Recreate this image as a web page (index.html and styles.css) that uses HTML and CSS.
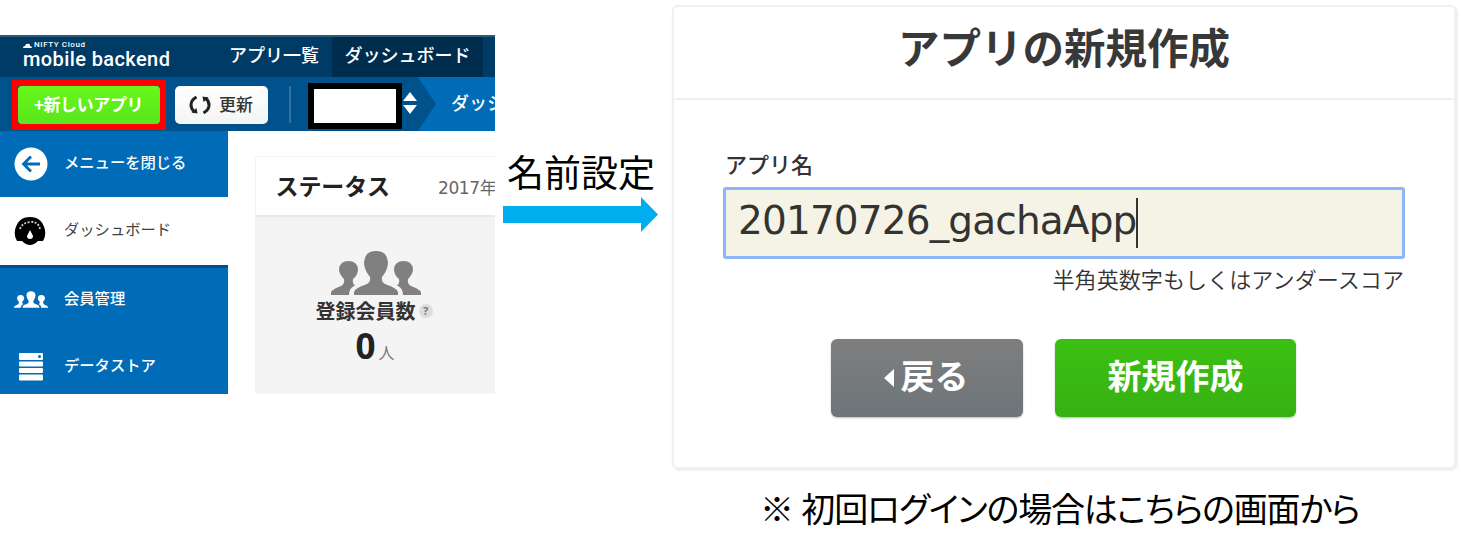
FILE: index.html
```html
<!DOCTYPE html>
<html lang="ja">
<head>
<meta charset="utf-8">
<title>アプリの新規作成</title>
<link rel="stylesheet" href="styles.css">
</head>
<body>
<svg class="defs" width="0" height="0">
  <symbol id="people" viewBox="0 0 90 46">
    <path d="M23 45V42Q24 38 35 34.500Q40 32.500 39 27Q33 20 33 12Q34 1 45 1T57 12Q57 20 51 27Q50 32.500 55 34.500Q66 38 67 42V45Z"/>
    <path d="M0 45V42Q2 39 10 36Q14 34 13 29Q8 24 8 19Q9 11 17.500 11T27 19Q27 25 22 29Q21 33 24 35.500Q18 38 18 45Z"/>
    <path d="M90 45V42Q88 39 80 36Q76 34 77 29Q82 24 82 19Q81 11 72.500 11T63 19Q63 25 68 29Q69 33 66 35.500Q72 38 72 45Z"/>
  </symbol>
</svg>
<main class="page">
  <section class="console">
    <nav class="topbar">
      <div class="brand"><span class="brand-small"><svg width="9" height="5" viewBox="0 0 9 5"><path d="M0 5Q0 3 2 3Q3 0 5 1Q7 0 7 3Q9 3 9 5Z"/></svg>NIFTY Cloud</span><span class="brand-name">mobile backend</span></div>
      <a class="tab apps">アプリ一覧</a>
      <a class="tab active">ダッシュボード</a>
    </nav>
    <div class="toolbar">
      <div class="highlight"><button class="new-app">+新しいアプリ</button></div>
      <button class="refresh"><svg width="24" height="20" viewBox="0 0 24 20"><path d="M8.500 2Q3 5 3 10Q3 14 6.500 17M15.500 18Q21 15 21 10Q21 6 17.500 3" fill="none" stroke="#222" stroke-width="3"/><path d="M3.500 17.500L9.500 18.500L8.500 13ZM20.500 2.500L14.500 1.500L15.500 7Z" fill="#222"/></svg><span>更新</span></button>
      <i class="divider"></i>
      <div class="app-select"></div>
      <svg class="sort" width="14" height="22" viewBox="0 0 14 22"><path d="M0 9L7 0L14 9ZM0 13H14L7 22Z" fill="#fff"/></svg>
      <div class="crumb"><svg width="18" height="54" viewBox="0 0 18 54"><path d="M0 0L18 27L0 54Z" fill="#00528c"/></svg><span>ダッシ</span></div>
    </div>
    <div class="body">
      <aside class="sidebar">
        <a class="item first"><span class="icon"><svg width="34" height="34" viewBox="0 0 34 34"><circle cx="17" cy="17" r="16.500" fill="#fff"/><path d="M26 17H10M17 9.500L9.500 17L17 24.500" fill="none" stroke="#006cb7" stroke-width="2.800"/></svg></span><span>メニューを閉じる</span></a>
        <a class="item current"><span class="icon"><svg width="32" height="30" viewBox="0 0 32 30"><path d="M3 25Q0 20 1 14Q4 1 16 1T31 14Q32 20 29 25H24Q20 29 16 29T8 25Z"/><path d="M6 13Q8 7 16 6T26 13" fill="none" stroke="#ccc" stroke-width="1.800" stroke-dasharray="2 1.500"/><path d="M16 14L19 20Q19 23 16 23T13 20Z" fill="#fff"/></svg></span><span>ダッシュボード</span></a>
        <a class="item members"><span class="icon"><svg width="34" height="19"><use href="#people" width="34" height="19"/></svg></span><span>会員管理</span></a>
        <a class="item store"><span class="icon"><svg width="24" height="28" viewBox="0 0 24 28" fill="#fff"><rect width="24" height="7" rx="1"/><rect y="8.500" width="24" height="5" rx="1"/><rect y="15" width="24" height="5" rx="1"/><rect y="21.500" width="24" height="6" rx="1"/><circle cx="20.500" cy="3.500" r="1.500" fill="#006cb7"/></svg></span><span>データストア</span></a>
      </aside>
      <div class="status">
        <header class="status-head"><b>ステータス</b><span>2017年</span></header>
        <div class="metric">
          <svg width="90" height="46" fill="#808080"><use href="#people" width="90" height="46"/></svg>
          <div class="metric-label"><b>登録会員数</b><i>?</i></div>
          <div class="metric-value"><b>0</b><span>人</span></div>
        </div>
      </div>
    </div>
  </section>
  <section class="step">
    <p>名前設定</p>
    <svg width="155" height="35" viewBox="0 0 155 35"><path d="M0 9H138V0L155 17.500L138 35V26H0Z" fill="#00aeef"/></svg>
  </section>
  <section class="create">
    <div class="dialog">
      <h1>アプリの新規作成</h1>
      <div class="form">
        <label>アプリ名</label>
        <div class="field"><span>20170726_gachaApp</span><i></i></div>
        <p class="hint">半角英数字もしくはアンダースコア</p>
        <div class="actions">
          <button class="back"><svg width="10" height="18" viewBox="0 0 10 18"><path d="M10 0V18L0 9Z" fill="#fff"/></svg><span>戻る</span></button>
          <button class="submit">新規作成</button>
        </div>
      </div>
    </div>
    <p class="note">※ 初回ログインの場合はこちらの画面から</p>
  </section>
</main>
</body>
</html>
```
FILE: styles.css
```css
* { box-sizing: border-box; }
body { margin: 0; background: #fff; font-family: "Noto Sans CJK JP", sans-serif; color: #333; overflow: hidden; }
.defs { position: absolute; }
p, h1 { margin: 0; }
i { font-style: normal; }
svg { display: block; flex: none; }
button { border: 0; padding: 0; font-family: inherit; display: flex; align-items: center; justify-content: center; white-space: nowrap; }
.page { display: flex; width: 1461px; height: 547px; white-space: nowrap; }

.console { width: 495px; height: 359px; margin-top: 35px; overflow: hidden; flex: none; }
.topbar { display: flex; height: 42px; background: #003b65; color: #fff; border-top: 2px solid #2d5a79; }
.brand { width: 218px; padding: 4px 0 0 23px; font-family: Roboto, sans-serif; }
.brand-small { display: flex; gap: 2px; height: 8px; align-items: center; font-size: 8px; font-weight: 500; letter-spacing: .6px; line-height: 8px; }
.brand-small svg { fill: #fff; }
.brand-name { display: block; font-size: 20px; line-height: 21px; font-weight: 500; letter-spacing: .4px; }
.tab { display: flex; align-items: center; justify-content: center; font-size: 18px; font-weight: 500; padding-bottom: 6px; }
.apps { width: 114px; padding-right: 2px; }
.active { width: 151px; background: #002d4e; }

.toolbar { display: flex; height: 54px; background: #00528c; align-items: flex-start; }
.highlight { width: 154px; height: 50px; margin: 3px 9px 0 12px; border: 6px solid #f00; flex: none; background: #00528c; }
.new-app { width: 142px; height: 38px; border-radius: 4px; background: linear-gradient(#68f61b, #58e61d); color: #fff; font-size: 17px; font-weight: 700; letter-spacing: -.4px; padding: 0 1px 3px 0; }
.refresh { width: 93px; height: 38px; margin-top: 9px; border-radius: 5px; background: linear-gradient(#fff, #f4f4f4); gap: 7px; color: #333; font-size: 17px; font-weight: 500; flex: none; padding-right: 2px; }
.refresh span { padding-bottom: 3px; }
.divider { width: 2px; height: 37px; margin: 9px 17px 0 21px; background: #34719f; flex: none; }
.app-select { width: 94px; height: 46px; margin: 6px 1px 0 0; border: 6px solid #000; background: #fff; flex: none; }
.sort { margin: 15px 1px 0 0; }
.crumb { display: flex; width: 77px; height: 54px; background: #006cb7; color: #fff; font-size: 18px; font-weight: 500; gap: 15px; overflow: hidden; flex: none; }
.crumb span { line-height: 50px; }

.body { display: flex; height: 263px; }
.sidebar { width: 227.500px; background: #006cb7; color: #fff; flex: none; font-size: 15.300px; font-weight: 500; }
.item { display: flex; align-items: center; height: 68px; }
.item > span:last-child { padding-bottom: 7px; }
.icon { width: 50px; margin: 0 0 0 14px; display: flex; flex: none; }
.icon svg { fill: #fff; }
.first { height: 66px; }
.current { background: #fff; color: #444; font-weight: 400; }
.current .icon svg { fill: #000; }
.members { border-top: 3px solid #004f86; }
.members .icon { padding-bottom: 3px; }
.store .icon { margin-left: 19px; width: 45px; }

.status { width: 245px; margin: 25px 0 0 27px; border: 1px solid #f5f5f5; flex: none; display: flex; flex-direction: column; }
.status-head { display: flex; align-items: center; gap: 48px; height: 60px; padding: 0 0 2px 20px; border-bottom: 2px solid #e8e8e8; color: #222; font-size: 23px; }
.status-head b { font-weight: 600; letter-spacing: -.1px; }
.status-head span { font: 17px "DejaVu Sans", "Noto Sans CJK JP", sans-serif; letter-spacing: -.4px; color: #666; padding-top: 3px; }
.metric { flex: 1; padding: 33px 0 0 60px; background: #f4f4f4; }
.metric svg { margin-left: 15px; }
.metric-label { display: flex; align-items: center; gap: 3px; font-size: 20px; line-height: 30px; color: #333; }
.metric-label i { width: 14px; height: 14px; border-radius: 50%; background: #ddd; color: #777; font: 700 11px/14px "Noto Sans", sans-serif; text-align: center; }
.metric-label b { font-weight: 600; }
.metric-value { display: flex; align-items: baseline; gap: 3px; padding-left: 40px; line-height: 40px; }
.metric-value b { font-family: "Open Sans", sans-serif; font-size: 35px; color: #222; }
.metric-value span { font-size: 16px; color: #777; }

.step { width: 178px; padding: 147px 0 0 8px; flex: none; color: #000; }
.step p { font-size: 37px; line-height: 48px; height: 50px; padding-left: 4px; }

.create { width: 783px; padding-top: 5px; flex: none; }
.dialog { height: 464px; border: 2px solid #f0f0f0; border-radius: 6px; box-shadow: 1px 1px 3px #e4e4e4; padding: 0 1px; margin-left: -1px; }
h1 { height: 93px; border-bottom: 2px solid #eee; font-size: 41.500px; line-height: 79px; font-weight: 700; text-align: center; color: #383838; }
.form { padding: 50px 48px 0; }
label { display: block; font-size: 22px; line-height: 26px; height: 30px; font-weight: 500; padding-left: 2px; }
.field { display: flex; align-items: flex-start; width: 682px; height: 72px; margin-top: 7px; padding: 8px 0 0 12px; background: #f5f3e6; border: 3px solid #8eb5f5; border-radius: 3px; color: #333; font: 39px/46px "DejaVu Sans", sans-serif; }
.field span { letter-spacing: -.850px; }
.field i { width: 2px; height: 50px; background: #333; }
.hint { font-size: 22.100px; line-height: 28px; height: 32px; margin-top: 5px; padding-right: 1px; text-align: right; font-weight: 350; color: #333; }
.actions { display: flex; gap: 32px; margin: 43px 0 0 108px; }
.actions button { height: 78px; border-radius: 6px; color: #fff; font-size: 34px; font-weight: 700; padding-bottom: 7px; box-shadow: 0 1px 2px #bbb; }
.back { width: 192px; background: linear-gradient(#7e7e7e, #6d757a); gap: 7px; }
.actions .back { padding-right: 2px; }
.back svg { margin-top: 6px; }
.submit { width: 241px; background: linear-gradient(#3cc013, #37b112); }
.note { font-size: 34px; line-height: 44px; margin: 17px 0 0 87px; color: #000; font-feature-settings: "palt"; letter-spacing: -1.150px; word-spacing: 2px; }
```
